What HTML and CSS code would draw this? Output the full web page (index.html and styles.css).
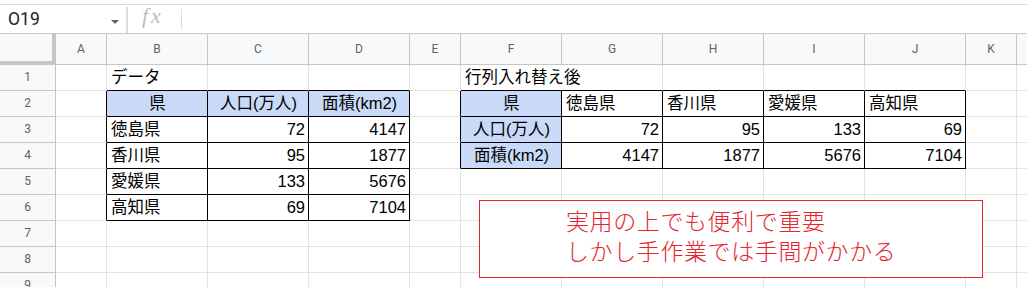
FILE: index.html
```html
<!DOCTYPE html>
<html lang="ja">
<head>
  <meta charset="UTF-8">
  <meta name="viewport" content="width=device-width, initial-scale=1.0">
  <title>行列入れ替え</title>
  <link rel="stylesheet" href="styles.css">
</head>
<body>

  <div class="toolbar-edge"></div>

  <div class="formula-bar">
    <div class="name-box">
      <span>O19</span>
      <span class="caret"></span>
    </div>
    <div class="divider"></div>
    <div class="fx">fx</div>
    <div class="divider-thin"></div>
  </div>

  <div class="sheet">
    <div class="row head">
      <div class="corner"></div>
      <div class="ch">A</div>
      <div class="ch">B</div>
      <div class="ch">C</div>
      <div class="ch">D</div>
      <div class="ch">E</div>
      <div class="ch">F</div>
      <div class="ch">G</div>
      <div class="ch">H</div>
      <div class="ch">I</div>
      <div class="ch">J</div>
      <div class="ch">K</div>
      <div class="ch"></div>
    </div>

    <div class="row">
      <div class="rh">1</div>
      <div class="c"></div>
      <div class="c top">データ</div>
      <div class="c top"></div>
      <div class="c top"></div>
      <div class="c"></div>
      <div class="c top spill">行列入れ替え後</div>
      <div class="c top"></div>
      <div class="c top"></div>
      <div class="c top"></div>
      <div class="c top"></div>
      <div class="c"></div>
      <div class="c"></div>
    </div>

    <div class="row">
      <div class="rh">2</div>
      <div class="c left"></div>
      <div class="c box key mid">県</div>
      <div class="c box key mid">人口(万人)</div>
      <div class="c box key mid">面積(km2)</div>
      <div class="c left"></div>
      <div class="c box key mid">県</div>
      <div class="c box">徳島県</div>
      <div class="c box">香川県</div>
      <div class="c box">愛媛県</div>
      <div class="c box">高知県</div>
      <div class="c"></div>
      <div class="c"></div>
    </div>

    <div class="row">
      <div class="rh">3</div>
      <div class="c left"></div>
      <div class="c box">徳島県</div>
      <div class="c box num">72</div>
      <div class="c box num">4147</div>
      <div class="c left"></div>
      <div class="c box key mid">人口(万人)</div>
      <div class="c box num">72</div>
      <div class="c box num">95</div>
      <div class="c box num">133</div>
      <div class="c box num">69</div>
      <div class="c"></div>
      <div class="c"></div>
    </div>

    <div class="row">
      <div class="rh">4</div>
      <div class="c left"></div>
      <div class="c box">香川県</div>
      <div class="c box num">95</div>
      <div class="c box num">1877</div>
      <div class="c left"></div>
      <div class="c box key mid">面積(km2)</div>
      <div class="c box num">4147</div>
      <div class="c box num">1877</div>
      <div class="c box num">5676</div>
      <div class="c box num">7104</div>
      <div class="c"></div>
      <div class="c"></div>
    </div>

    <div class="row">
      <div class="rh">5</div>
      <div class="c left"></div>
      <div class="c box">愛媛県</div>
      <div class="c box num">133</div>
      <div class="c box num">5676</div>
      <div class="c"></div>
      <div class="c"></div>
      <div class="c"></div>
      <div class="c"></div>
      <div class="c"></div>
      <div class="c"></div>
      <div class="c"></div>
      <div class="c"></div>
    </div>

    <div class="row">
      <div class="rh">6</div>
      <div class="c left"></div>
      <div class="c box">高知県</div>
      <div class="c box num">69</div>
      <div class="c box num">7104</div>
      <div class="c"></div>
      <div class="c"></div>
      <div class="c"></div>
      <div class="c"></div>
      <div class="c"></div>
      <div class="c"></div>
      <div class="c"></div>
      <div class="c"></div>
    </div>

    <div class="row">
      <div class="rh">7</div>
      <div class="c"></div>
      <div class="c"></div>
      <div class="c"></div>
      <div class="c"></div>
      <div class="c"></div>
      <div class="c"></div>
      <div class="c"></div>
      <div class="c"></div>
      <div class="c"></div>
      <div class="c"></div>
      <div class="c"></div>
      <div class="c"></div>
    </div>

    <div class="row">
      <div class="rh">8</div>
      <div class="c"></div>
      <div class="c"></div>
      <div class="c"></div>
      <div class="c"></div>
      <div class="c"></div>
      <div class="c"></div>
      <div class="c"></div>
      <div class="c"></div>
      <div class="c"></div>
      <div class="c"></div>
      <div class="c"></div>
      <div class="c"></div>
    </div>

    <div class="row">
      <div class="rh">9</div>
      <div class="c"></div>
      <div class="c"></div>
      <div class="c"></div>
      <div class="c"></div>
      <div class="c"></div>
      <div class="c"></div>
      <div class="c"></div>
      <div class="c"></div>
      <div class="c"></div>
      <div class="c"></div>
      <div class="c"></div>
      <div class="c"></div>
    </div>

    <!-- drawing placed over the grid -->
    <div class="note">
      <div>実用の上でも便利で重要</div>
      <div>しかし手作業では手間がかかる</div>
    </div>
  </div>

</body>
</html>
```

FILE: styles.css
```css
* {
  box-sizing: border-box;
}

html,
body {
  margin: 0;
  overflow: hidden;
}

body {
  width: 1027px;
  height: 287px;
  background-color: #ffffff;
  font-family: "Liberation Sans", "Noto Sans CJK JP", sans-serif;
  color: #000000;
}

.toolbar-edge {
  height: 5px;
  border-bottom: 1px solid #dadce0;
}

/* name box + fx */
.formula-bar {
  display: flex;
  align-items: center;
  height: 29px;
  border-bottom: 1px solid #c4c7c5;
}

.name-box {
  display: flex;
  align-items: center;
  width: 126px;
  height: 100%;
  padding-left: 8px;
  font-family: Roboto, "Liberation Sans", sans-serif;
  font-size: 17.5px;
  color: #202124;
}

.caret {
  margin: 5px 7px 0 auto;
  border-left: 4px solid transparent;
  border-right: 4px solid transparent;
  border-top: 4px solid #5f6368;
}

.divider {
  align-self: flex-end;
  width: 2px;
  height: 26px;
  background-color: #dadce0;
}

.fx {
  width: 53px;
  padding-left: 14px;
  margin-bottom: 7px;
  font-family: "Liberation Serif", serif;
  font-style: italic;
  font-size: 22px;
  letter-spacing: 3px;
  color: #bdbdbd;
}

.divider-thin {
  width: 1px;
  height: 20px;
  background-color: #dadce0;
}

/* grid */
.sheet {
  position: relative;
}

.row {
  display: grid;
  grid-template-columns: 56px 51px 101px 101px 101px 51px 101px 101px 101px 101px 101px 51px 1fr;
  height: 26px;
}

.row.head {
  height: 31px;
}

.corner {
  background-color: #f8f9fa;
  border-right: 4px solid #c4c7c5;
  border-bottom: 4px solid #c4c7c5;
}

.ch,
.rh {
  background-color: #f8f9fa;
  border-right: 1px solid #c4c7c5;
  border-bottom: 1px solid #c4c7c5;
  font-family: Roboto, "Liberation Sans", sans-serif;
  font-size: 12px;
  color: #5f6368;
  text-align: center;
}

.ch {
  line-height: 30px;
}

.rh {
  line-height: 25px;
}

.c {
  border-right: 1px solid #e2e2e2;
  border-bottom: 1px solid #e2e2e2;
  padding: 0 3px 0 4px;
  font-size: 16.5px;
  line-height: 25px;
  white-space: nowrap;
  overflow: hidden;
}

.row > :last-child {
  border-right: none;
}

.c.spill {
  overflow: visible;
  border-right-width: 0;
}

.c.top {
  border-bottom-color: #000000;
}

.c.left {
  border-right-color: #000000;
}

.c.box {
  border-right-color: #000000;
  border-bottom-color: #000000;
}

.c.key {
  background-color: #c9daf8;
}

.c.mid {
  text-align: center;
}

.c.num {
  text-align: right;
}

.note {
  position: absolute;
  left: 479px;
  top: 166px;
  width: 504px;
  height: 78px;
  padding: 4px 0 0 86px;
  background-color: #ffffff;
  border: 1px solid #e5252d;
  color: #e5252d;
  font-family: "Noto Sans CJK JP", sans-serif;
  font-size: 23px;
  font-weight: 300;
  line-height: 30px;
  letter-spacing: 0.6px;
}
```
